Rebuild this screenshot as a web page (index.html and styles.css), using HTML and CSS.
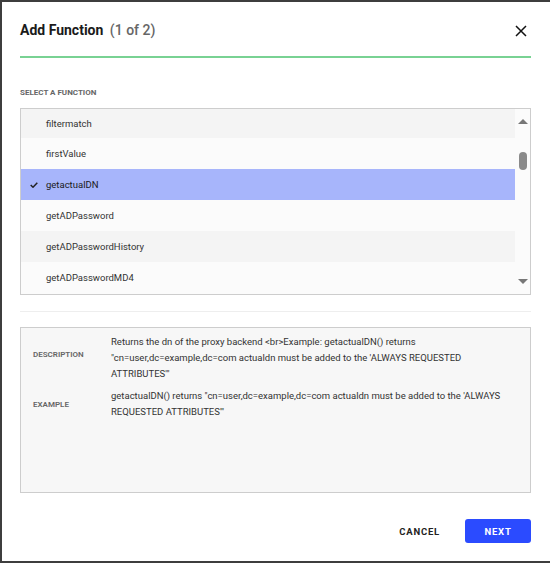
FILE: index.html
```html
<!DOCTYPE html>
<html>
<head>
<meta charset="utf-8">
<link rel="stylesheet" href="styles.css">
</head>
<body>
<div class="dialog">
  <div class="header">
    <div class="title">Add Function <span class="step">(1 of 2)</span></div>
    <svg class="close" width="12" height="12" viewBox="0 0 12 12"><path d="M1 1L11 11M11 1L1 11" stroke="#111" stroke-width="1.5" fill="none"/></svg>
  </div>
  <div class="rule"></div>
  <div class="section-label">SELECT A FUNCTION</div>
  <div class="listbox">
    <div class="rows">
      <div class="row alt first">filtermatch</div>
      <div class="row">firstValue</div>
      <div class="row selected"><svg class="check" width="8" height="6" viewBox="0 0 8 6"><path d="M0.7 3L3 5.2L7.3 0.8" stroke="#222" stroke-width="1.5" fill="none"/></svg>getactualDN</div>
      <div class="row">getADPassword</div>
      <div class="row alt">getADPasswordHistory</div>
      <div class="row">getADPasswordMD4</div>
    </div>
    <div class="scrollbar">
      <svg class="arrow" width="10" height="5" viewBox="0 0 10 5"><path d="M0 5L5 0L10 5Z" fill="#777"/></svg>
      <div class="track"><div class="thumb"></div></div>
      <svg class="arrow" width="10" height="5" viewBox="0 0 10 5"><path d="M0 0L10 0L5 5Z" fill="#777"/></svg>
    </div>
  </div>
  <div class="divider"></div>
  <div class="info">
    <div class="info-label desc">DESCRIPTION</div>
    <div class="info-text">Returns the dn of the proxy backend &lt;br&gt;Example: getactualDN() returns "cn=user,dc=example,dc=com actualdn must be added to the 'ALWAYS REQUESTED ATTRIBUTES'"</div>
    <div class="info-label">EXAMPLE</div>
    <div class="info-text">getactualDN() returns "cn=user,dc=example,dc=com actualdn must be added to the 'ALWAYS REQUESTED ATTRIBUTES'"</div>
  </div>
  <div class="footer">
    <button class="btn-cancel">CANCEL</button>
    <button class="btn-next">NEXT</button>
  </div>
</div>
</body>
</html>
```
FILE: styles.css
```css
html {
  background: #3e3e3e;
}
html, body {
  margin: 0;
  padding: 0;
  width: 100%;
  height: 100%;
  overflow: hidden;
}
body {
  font-family: Roboto, "Liberation Sans", Arial, sans-serif;
  color: #222;
  padding: 2px 0 0 2px;
  box-sizing: border-box;
}
.dialog {
  width: 100%;
  height: 559px;
  box-sizing: border-box;
  background: #fff;
  padding: 0 19px 0 18px;
  display: flex;
  flex-direction: column;
}
.header {
  padding-top: 18px;
  height: 20px;
  display: flex;
  align-items: center;
  justify-content: space-between;
}
.title {
  font-size: 14px;
  font-weight: 700;
  line-height: 20px;
  color: #1a1a1a;
}
.step {
  font-weight: 500;
  color: #666;
  margin-left: 3px;
}
.close {
  margin-right: 4px;
  margin-top: 2px;
}
.rule {
  margin-top: 16px;
  height: 2px;
  background: #79d293;
}
.section-label {
  margin-top: 30px;
  font-size: 8px;
  font-weight: 700;
  line-height: 10px;
  color: #666;
}
.listbox {
  margin-top: 10px;
  height: 187px;
  box-sizing: border-box;
  border: 1px solid #cdcdcd;
  display: flex;
  overflow: hidden;
  background: #fbfbfb;
}
.rows {
  flex: 1;
  overflow: hidden;
}
.row {
  height: 31px;
  display: flex;
  align-items: center;
  padding-left: 25px;
  font-size: 9.5px;
  color: #333;
  background: #fbfbfb;
  position: relative;
}
.row.first {
  height: 29px;
}
.row.alt {
  background: #f4f4f4;
}
.row.selected {
  background: #a7b5fb;
  color: #1a1a1a;
}
.check {
  position: absolute;
  left: 9px;
  top: 13px;
}
.scrollbar {
  width: 15px;
  display: flex;
  flex-direction: column;
  align-items: center;
  background: #fbfbfb;
  padding: 10px 0 10px 0;
}
.track {
  flex: 1;
  width: 100%;
  display: flex;
  justify-content: center;
}
.thumb {
  margin-top: 28px;
  width: 8px;
  height: 18px;
  border-radius: 4px;
  background: #8a8a8a;
}
.divider {
  margin-top: 16px;
  height: 1px;
  background: #eeeeee;
}
.info {
  margin-top: 15px;
  height: 166px;
  box-sizing: border-box;
  border: 1px solid #cdcdcd;
  background: #f7f7f7;
  padding: 6px 25px 0 12px;
  display: grid;
  grid-template-columns: 78px 1fr;
  grid-auto-rows: min-content;
  row-gap: 6px;
  align-items: center;
}
.info-label {
  font-size: 8px;
  font-weight: 600;
  color: #666;
}
.info-label.desc {
  margin-bottom: 8px;
}
.info-text {
  font-size: 9.5px;
  line-height: 16px;
  color: #333;
}
.footer {
  margin-top: 26px;
  display: flex;
  justify-content: flex-end;
  align-items: center;
  gap: 25px;
}
button {
  font-family: inherit;
  border: none;
  cursor: pointer;
}
.btn-cancel {
  background: none;
  font-size: 9.5px;
  font-weight: 700;
  letter-spacing: 0.8px;
  color: #222;
  padding: 0;
}
.btn-next {
  width: 66px;
  height: 24px;
  border-radius: 3px;
  background: #2b4bff;
  color: #fff;
  font-size: 9.5px;
  font-weight: 700;
  letter-spacing: 0.8px;
}
```
